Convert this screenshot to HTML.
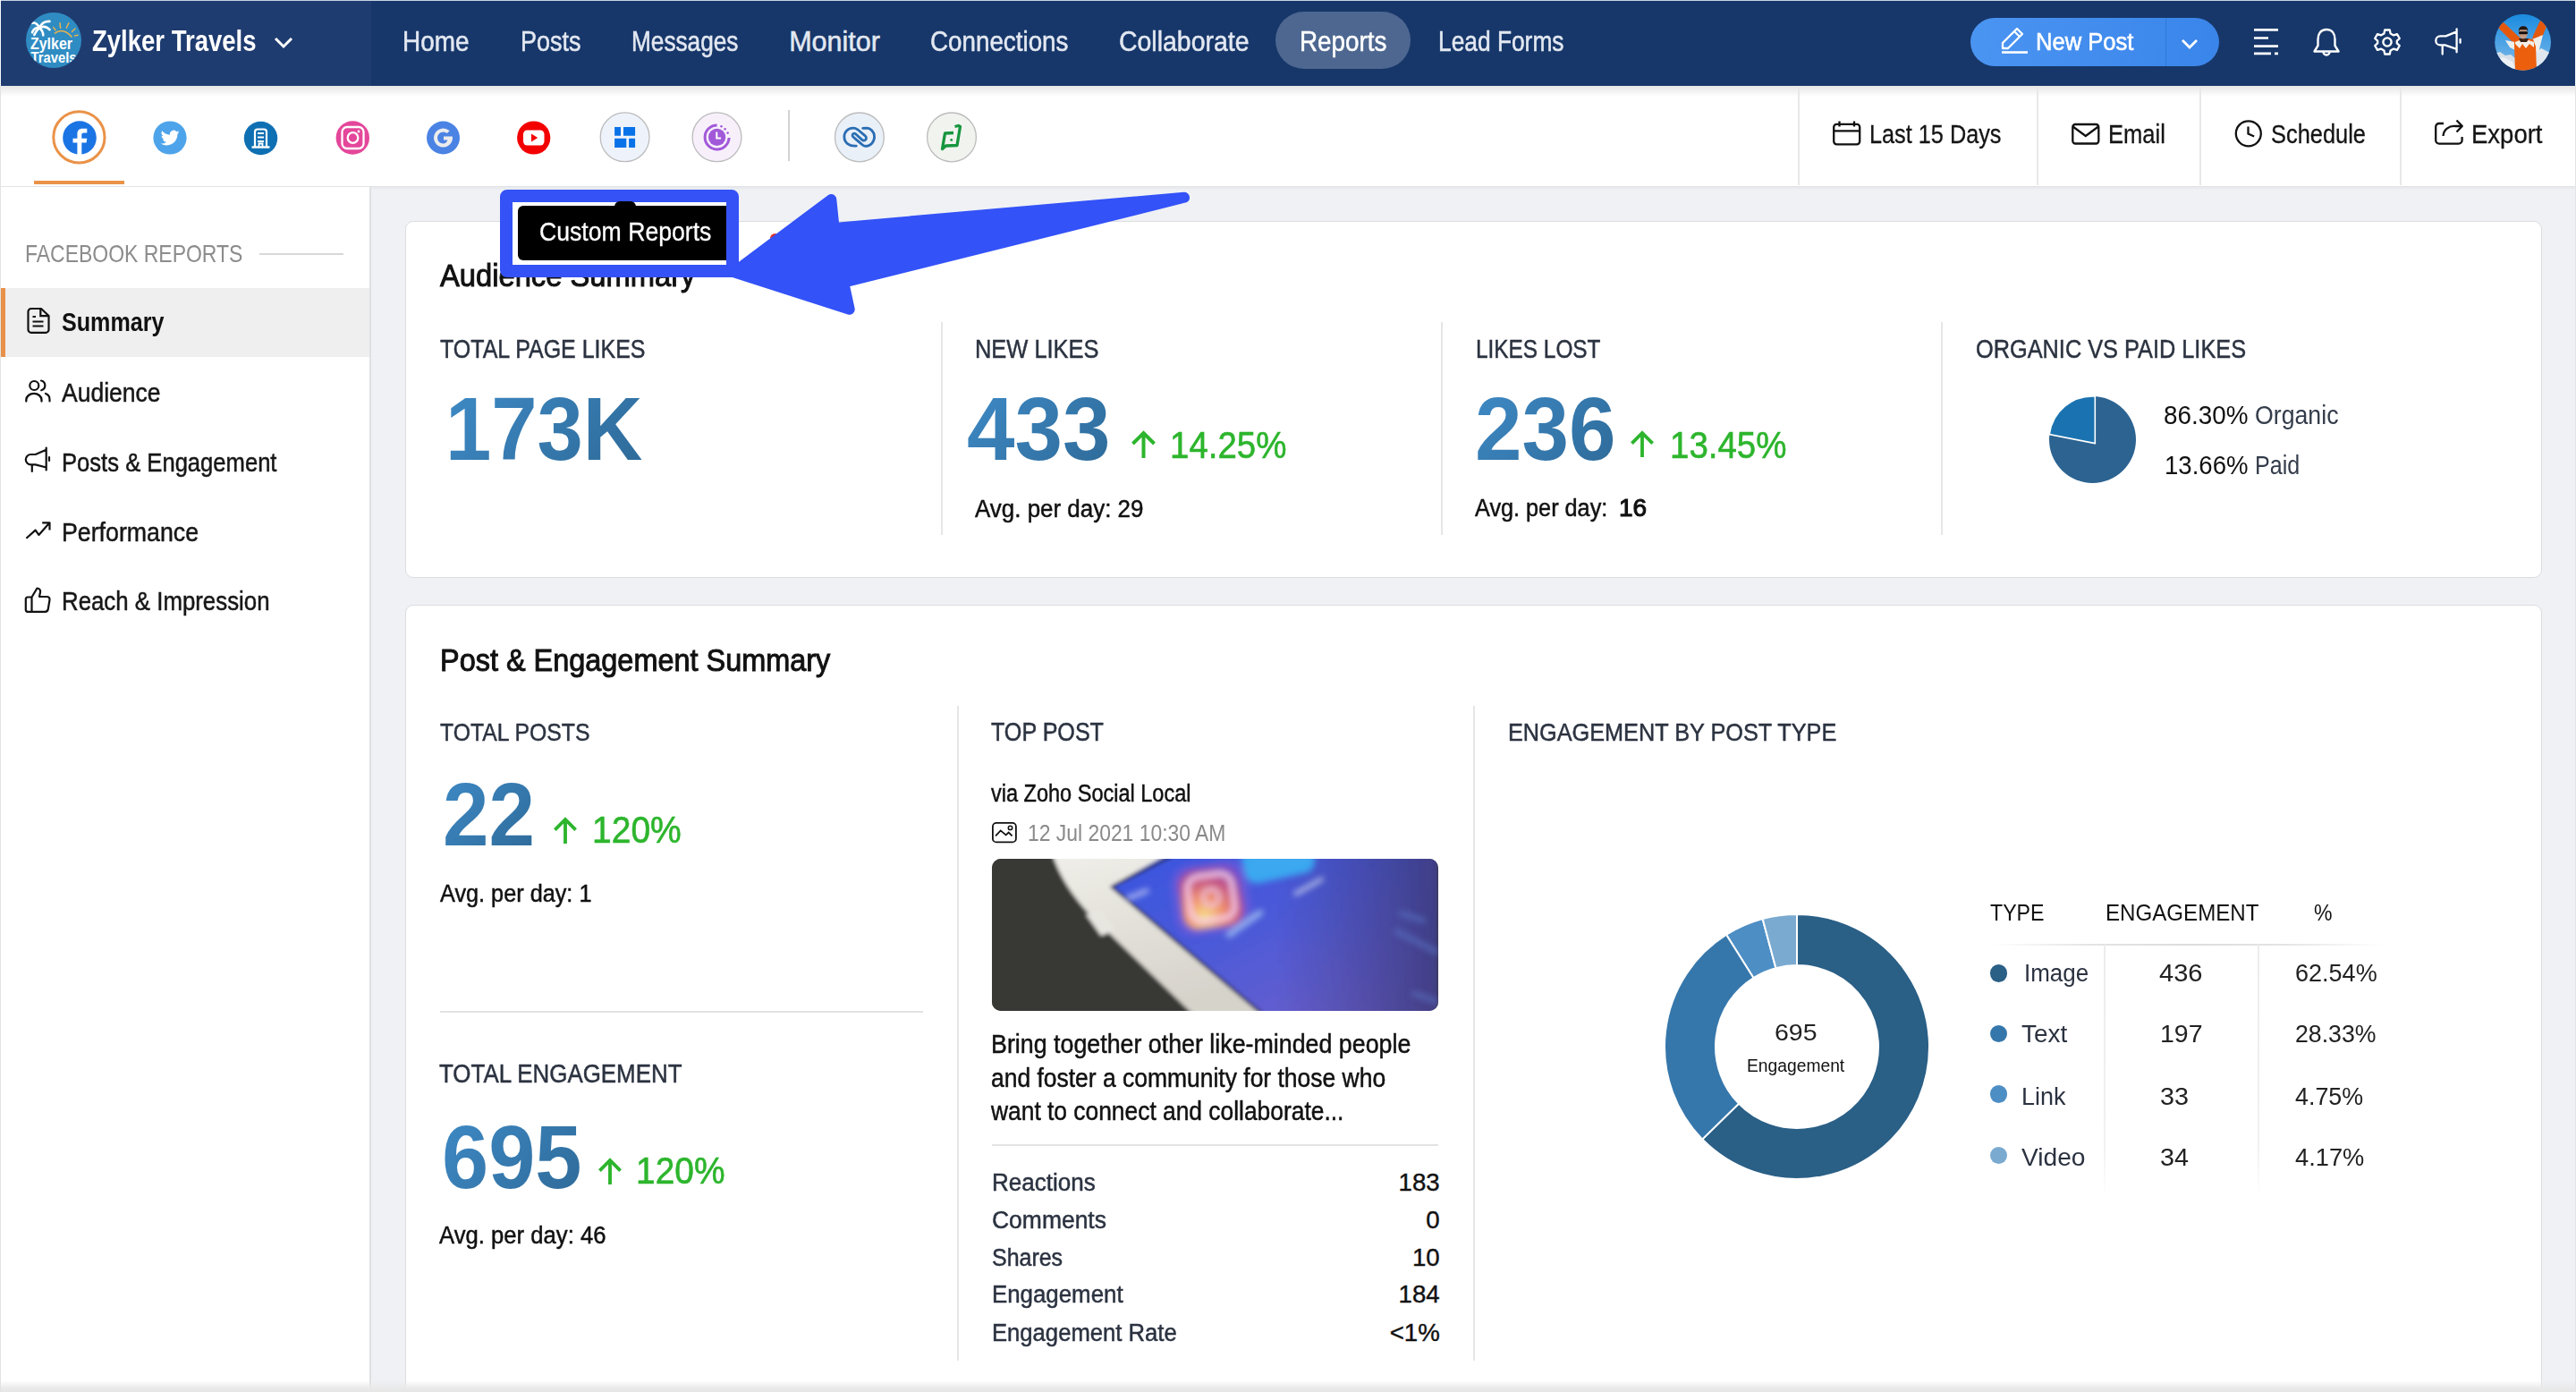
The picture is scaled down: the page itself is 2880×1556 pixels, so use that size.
<!DOCTYPE html><html><head><meta charset="utf-8"><style>
*{box-sizing:border-box}
html,body{margin:0;padding:0;width:2880px;height:1556px;overflow:hidden;background:#eff1f5;font-family:"Liberation Sans",sans-serif}
.t{position:absolute;white-space:pre;transform-origin:0 0}
.a{position:absolute}
</style></head><body>
<div class="a" style="left:0;top:0;width:2880px;height:96px;background:#17376a"></div><div class="a" style="left:0;top:0;width:415px;height:96px;background:#1f3c70"></div><div class="a" style="left:0;top:0;width:2880px;height:1px;background:#c9d3e3"></div><div class="a" style="left:0;top:96px;width:2880px;height:113px;background:#fff;border-bottom:1.5px solid #e2e3e6;box-shadow:0 2px 3px rgba(0,0,0,0.04)"></div><div class="a" style="left:0;top:96px;width:2880px;height:12px;background:linear-gradient(#e6e6e6,rgba(255,255,255,0))"></div><div class="a" style="left:0;top:209px;width:415px;height:1347px;background:#fff;border-right:2px solid #dfe0e3;border-left:1px solid #ececec"></div><div class="a" style="left:453px;top:247px;width:2389px;height:399px;background:#fff;border:1.5px solid #dcdde1;border-radius:9px"></div><div class="a" style="left:453px;top:676px;width:2389px;height:1000px;background:#fff;border:1.5px solid #dcdde1;border-radius:9px"></div><div class="a" style="left:0;top:1543px;width:2880px;height:13px;background:linear-gradient(rgba(230,230,230,0),#e9e9e9 70%,#e6e6e6)"></div><div class="t" style="left:103.2px;top:29.6px;font-size:32.56px;line-height:32.56px;font-weight:bold;color:#fff;transform:scaleX(0.8449);">Zylker Travels</div>
<div class="t" style="left:450.2px;top:31.4px;font-size:30.52px;line-height:30.52px;color:#e3e8f1;transform:scaleX(0.9148);-webkit-text-stroke:0.5px #e3e8f1;">Home</div>
<div class="t" style="left:582.2px;top:31.4px;font-size:30.52px;line-height:30.52px;color:#e3e8f1;transform:scaleX(0.8842);-webkit-text-stroke:0.5px #e3e8f1;">Posts</div>
<div class="t" style="left:706.2px;top:31.4px;font-size:30.52px;line-height:30.52px;color:#e3e8f1;transform:scaleX(0.8589);-webkit-text-stroke:0.5px #e3e8f1;">Messages</div>
<div class="t" style="left:882.2px;top:31.4px;font-size:30.52px;line-height:30.52px;color:#e3e8f1;-webkit-text-stroke:0.5px #e3e8f1;">Monitor</div>
<div class="t" style="left:1040.2px;top:31.4px;font-size:30.52px;line-height:30.52px;color:#e3e8f1;transform:scaleX(0.9105);-webkit-text-stroke:0.5px #e3e8f1;">Connections</div>
<div class="t" style="left:1251.2px;top:31.4px;font-size:30.52px;line-height:30.52px;color:#e3e8f1;transform:scaleX(0.9321);-webkit-text-stroke:0.5px #e3e8f1;">Collaborate</div>
<div class="t" style="left:1608.2px;top:31.4px;font-size:30.52px;line-height:30.52px;color:#e3e8f1;transform:scaleX(0.8628);-webkit-text-stroke:0.5px #e3e8f1;">Lead Forms</div>
<div class="a" style="left:1426px;top:13px;width:151px;height:64px;border-radius:32px;background:#4e6790"></div><div class="t" style="left:1453.2px;top:31.4px;font-size:30.52px;line-height:30.52px;color:#fff;transform:scaleX(0.9124);-webkit-text-stroke:0.5px #fff;">Reports</div>
<div class="a" style="left:2203px;top:20px;width:278px;height:54px;border-radius:27px;background:linear-gradient(90deg,#4a94f2,#3a85ea)"></div><div class="a" style="left:2421px;top:20px;width:1px;height:54px;background:#3179d8"></div><div class="t" style="left:2276.2px;top:33.2px;font-size:27.62px;line-height:27.62px;color:#fff;transform:scaleX(0.9266);-webkit-text-stroke:0.6px #fff;">New Post</div>
<div class="a" style="left:2010px;top:96px;width:1.5px;height:111px;background:#e8e8e8"></div><div class="a" style="left:2277px;top:96px;width:1.5px;height:111px;background:#e8e8e8"></div><div class="a" style="left:2459px;top:96px;width:1.5px;height:111px;background:#e8e8e8"></div><div class="a" style="left:2683px;top:96px;width:1.5px;height:111px;background:#e8e8e8"></div><div class="t" style="left:2090.2px;top:136.1px;font-size:29.07px;line-height:29.07px;color:#141414;transform:scaleX(0.8694);-webkit-text-stroke:0.3px #141414;">Last 15 Days</div>
<div class="t" style="left:2356.8px;top:136.1px;font-size:29.07px;line-height:29.07px;color:#141414;transform:scaleX(0.8789);-webkit-text-stroke:0.3px #141414;">Email</div>
<div class="t" style="left:2538.7px;top:136.1px;font-size:29.07px;line-height:29.07px;color:#141414;transform:scaleX(0.8744);-webkit-text-stroke:0.3px #141414;">Schedule</div>
<div class="t" style="left:2763.2px;top:136.1px;font-size:29.07px;line-height:29.07px;color:#141414;transform:scaleX(0.9463);-webkit-text-stroke:0.3px #141414;">Export</div>
<div class="t" style="left:28.2px;top:270.7px;font-size:26.74px;line-height:26.74px;color:#8c8c8c;transform:scaleX(0.8593);">FACEBOOK REPORTS</div>
<div class="a" style="left:290px;top:283px;width:94px;height:1.5px;background:#d8d8d8"></div><div class="a" style="left:0;top:322px;width:413px;height:77px;background:#efefef"></div><div class="a" style="left:1px;top:322px;width:5px;height:77px;background:#e8914a"></div><div class="t" style="left:69.2px;top:344.7px;font-size:29.80px;line-height:29.80px;font-weight:bold;color:#111;transform:scaleX(0.8431);">Summary</div>
<div class="t" style="left:69.2px;top:424.3px;font-size:29.80px;line-height:29.80px;color:#161616;transform:scaleX(0.8893);-webkit-text-stroke:0.5px #161616;">Audience</div>
<div class="t" style="left:69.2px;top:501.7px;font-size:29.80px;line-height:29.80px;color:#161616;transform:scaleX(0.8591);-webkit-text-stroke:0.5px #161616;">Posts &amp; Engagement</div>
<div class="t" style="left:69.2px;top:579.7px;font-size:29.80px;line-height:29.80px;color:#161616;transform:scaleX(0.8975);-webkit-text-stroke:0.5px #161616;">Performance</div>
<div class="t" style="left:69.2px;top:656.7px;font-size:29.80px;line-height:29.80px;color:#161616;transform:scaleX(0.8666);-webkit-text-stroke:0.5px #161616;">Reach &amp; Impression</div>
<div class="t" style="left:491.7px;top:290.6px;font-size:35.76px;line-height:35.76px;color:#111;transform:scaleX(0.9150);-webkit-text-stroke:1px #111;">Audience Summary</div>
<div class="t" style="left:491.7px;top:374.9px;font-size:29.51px;line-height:29.51px;color:#2b3240;transform:scaleX(0.8465);-webkit-text-stroke:0.5px #2b3240;">TOTAL PAGE LIKES</div>
<div class="t" style="left:498.2px;top:428.8px;font-size:100.29px;line-height:100.29px;font-weight:bold;color:#111;transform:scaleX(0.9195);background:linear-gradient(135deg,#3e8ac6 0%,#2e6a98 100%);-webkit-background-clip:text;background-clip:text;color:transparent;">173K</div>
<div class="a" style="left:1052px;top:360px;width:1.5px;height:238px;background:#e6e6e6"></div><div class="a" style="left:1611px;top:360px;width:1.5px;height:238px;background:#e6e6e6"></div><div class="a" style="left:2170px;top:360px;width:1.5px;height:238px;background:#e6e6e6"></div><div class="t" style="left:1090.2px;top:374.9px;font-size:29.51px;line-height:29.51px;color:#2b3240;transform:scaleX(0.8619);-webkit-text-stroke:0.5px #2b3240;">NEW LIKES</div>
<div class="t" style="left:1081.2px;top:428.8px;font-size:100.29px;line-height:100.29px;font-weight:bold;color:#111;transform:scaleX(0.9594);background:linear-gradient(135deg,#3e8ac6 0%,#2e6a98 100%);-webkit-background-clip:text;background-clip:text;color:transparent;">433</div>
<svg class="a" style="left:1263px;top:481px" width="31" height="31" viewBox="0 0 30 31"><path d="M15 3V31M3 15L15 3L27 15" fill="none" stroke="#2db52d" stroke-width="4"/></svg>
<div class="t" style="left:1308.2px;top:477.2px;font-size:42.15px;line-height:42.15px;color:#2db52d;transform:scaleX(0.9127);-webkit-text-stroke:0.6px #2db52d;">14.25%</div>
<div class="t" style="left:1090.2px;top:554.5px;font-size:27.62px;line-height:27.62px;color:#111;transform:scaleX(0.9397);-webkit-text-stroke:0.5px #111;">Avg. per day: 29</div>
<div class="t" style="left:1650.0px;top:374.5px;font-size:29.51px;line-height:29.51px;color:#2b3240;transform:scaleX(0.8258);-webkit-text-stroke:0.5px #2b3240;">LIKES LOST</div>
<div class="t" style="left:1649.2px;top:428.5px;font-size:100.29px;line-height:100.29px;font-weight:bold;color:#111;transform:scaleX(0.9415);background:linear-gradient(135deg,#3e8ac6 0%,#2e6a98 100%);-webkit-background-clip:text;background-clip:text;color:transparent;">236</div>
<svg class="a" style="left:1821px;top:481px" width="30" height="30" viewBox="0 0 30 31"><path d="M15 3V31M3 15L15 3L27 15" fill="none" stroke="#2db52d" stroke-width="4"/></svg>
<div class="t" style="left:1866.6px;top:476.8px;font-size:42.15px;line-height:42.15px;color:#2db52d;transform:scaleX(0.9127);-webkit-text-stroke:0.6px #2db52d;">13.45%</div>
<div class="t" style="left:1649.2px;top:554.3px;font-size:27.62px;line-height:27.62px;color:#111;transform:scaleX(0.9142);-webkit-text-stroke:0.5px #111;">Avg. per day:</div>
<div class="t" style="left:1810.0px;top:554.3px;font-size:27.62px;line-height:27.62px;color:#111;transform:scaleX(1.0127);-webkit-text-stroke:1.1px #111;">16</div>
<div class="t" style="left:2209.2px;top:374.7px;font-size:29.51px;line-height:29.51px;color:#2b3240;transform:scaleX(0.8583);-webkit-text-stroke:0.5px #2b3240;">ORGANIC VS PAID LIKES</div>
<div class="t" style="left:2418.9px;top:449.7px;font-size:28.63px;line-height:28.63px;color:#111;transform:scaleX(0.9730);">86.30%</div>
<div class="t" style="left:2520.7px;top:449.7px;font-size:28.63px;line-height:28.63px;color:#343c4b;transform:scaleX(0.9327);">Organic</div>
<div class="t" style="left:2420.2px;top:506.0px;font-size:28.63px;line-height:28.63px;color:#111;transform:scaleX(0.9627);">13.66%</div>
<div class="t" style="left:2520.7px;top:506.0px;font-size:28.63px;line-height:28.63px;color:#343c4b;transform:scaleX(0.8762);">Paid</div>
<svg class="a" style="left:2280px;top:430px" width="120" height="120" viewBox="2280 430 120 120"><circle cx="2339.5" cy="491.5" r="48.5" fill="#2c6391"/><path d="M2342.3 495.6L2291.3 485.5A48.5 48.5 0 0 1 2342.3 443Z" fill="#1a73b0" stroke="#fff" stroke-width="1.6" stroke-linejoin="miter"/></svg>
<div class="t" style="left:492.2px;top:719.8px;font-size:35.17px;line-height:35.17px;color:#111;transform:scaleX(0.9226);-webkit-text-stroke:1px #111;">Post &amp; Engagement Summary</div>
<div class="t" style="left:492.2px;top:803.9px;font-size:28.34px;line-height:28.34px;color:#2b3240;transform:scaleX(0.8741);-webkit-text-stroke:0.5px #2b3240;">TOTAL POSTS</div>
<div class="t" style="left:495.2px;top:859.8px;font-size:100.29px;line-height:100.29px;font-weight:bold;color:#111;transform:scaleX(0.9236);background:linear-gradient(135deg,#3e8ac6 0%,#2e6a98 100%);-webkit-background-clip:text;background-clip:text;color:transparent;">22</div>
<svg class="a" style="left:617px;top:913px" width="30" height="30" viewBox="0 0 30 31"><path d="M15 3V31M3 15L15 3L27 15" fill="none" stroke="#2db52d" stroke-width="4"/></svg>
<div class="t" style="left:661.9px;top:907.2px;font-size:42.15px;line-height:42.15px;color:#2db52d;transform:scaleX(0.9256);-webkit-text-stroke:0.6px #2db52d;">120%</div>
<div class="t" style="left:492.2px;top:984.5px;font-size:27.62px;line-height:27.62px;color:#111;transform:scaleX(0.9150);-webkit-text-stroke:0.5px #111;">Avg. per day: 1</div>
<div class="a" style="left:492px;top:1130px;width:540px;height:1.5px;background:#e3e3e3"></div><div class="t" style="left:491.2px;top:1184.6px;font-size:29.51px;line-height:29.51px;color:#2b3240;transform:scaleX(0.8778);-webkit-text-stroke:0.5px #2b3240;">TOTAL ENGAGEMENT</div>
<div class="t" style="left:494.2px;top:1242.8px;font-size:100.29px;line-height:100.29px;font-weight:bold;color:#111;transform:scaleX(0.9355);background:linear-gradient(135deg,#3e8ac6 0%,#2e6a98 100%);-webkit-background-clip:text;background-clip:text;color:transparent;">695</div>
<svg class="a" style="left:667px;top:1294px" width="30" height="30" viewBox="0 0 30 31"><path d="M15 3V31M3 15L15 3L27 15" fill="none" stroke="#2db52d" stroke-width="4"/></svg>
<div class="t" style="left:711.2px;top:1288.2px;font-size:42.15px;line-height:42.15px;color:#2db52d;transform:scaleX(0.9228);-webkit-text-stroke:0.6px #2db52d;">120%</div>
<div class="t" style="left:491.2px;top:1366.5px;font-size:27.62px;line-height:27.62px;color:#111;transform:scaleX(0.9297);-webkit-text-stroke:0.5px #111;">Avg. per day: 46</div>
<div class="a" style="left:1070px;top:789px;width:1.5px;height:732px;background:#e6e6e6"></div><div class="a" style="left:1647px;top:789px;width:1.5px;height:732px;background:#e6e6e6"></div><div class="t" style="left:1108.2px;top:804.0px;font-size:28.78px;line-height:28.78px;color:#2b3240;transform:scaleX(0.8721);-webkit-text-stroke:0.5px #2b3240;">TOP POST</div>
<div class="t" style="left:1108.2px;top:873.3px;font-size:27.62px;line-height:27.62px;color:#111;transform:scaleX(0.8515);-webkit-text-stroke:0.5px #111;">via Zoho Social Local</div>
<div class="t" style="left:1149.2px;top:918.5px;font-size:25.29px;line-height:25.29px;color:#8a8a8a;transform:scaleX(0.9053);">12 Jul 2021 10:30 AM</div>
<div class="t" style="left:1108.2px;top:1153.3px;font-size:29.07px;line-height:29.07px;color:#111;transform:scaleX(0.9223);-webkit-text-stroke:0.5px #111;">Bring together other like-minded people</div>
<div class="t" style="left:1108.2px;top:1190.8px;font-size:29.07px;line-height:29.07px;color:#111;transform:scaleX(0.9102);-webkit-text-stroke:0.5px #111;">and foster a community for those who</div>
<div class="t" style="left:1108.3px;top:1227.8px;font-size:29.07px;line-height:29.07px;color:#111;transform:scaleX(0.9074);-webkit-text-stroke:0.5px #111;">want to connect and collaborate...</div>
<div class="a" style="left:1109px;top:1279px;width:499px;height:1.5px;background:#e3e3e3"></div><div class="t" style="left:1108.6px;top:1308.2px;font-size:27.62px;line-height:27.62px;color:#2b3240;transform:scaleX(0.9437);-webkit-text-stroke:0.5px #2b3240;">Reactions</div>
<div class="t" style="left:1563.6px;top:1308.2px;font-size:27.62px;line-height:27.62px;color:#111;-webkit-text-stroke:0.4px #111;">183</div>
<div class="t" style="left:1108.6px;top:1349.9px;font-size:27.62px;line-height:27.62px;color:#2b3240;transform:scaleX(0.9586);-webkit-text-stroke:0.5px #2b3240;">Comments</div>
<div class="t" style="left:1594.3px;top:1349.9px;font-size:27.62px;line-height:27.62px;color:#111;-webkit-text-stroke:0.4px #111;">0</div>
<div class="t" style="left:1108.6px;top:1392.1px;font-size:27.62px;line-height:27.62px;color:#2b3240;transform:scaleX(0.9041);-webkit-text-stroke:0.5px #2b3240;">Shares</div>
<div class="t" style="left:1579.0px;top:1392.1px;font-size:27.62px;line-height:27.62px;color:#111;-webkit-text-stroke:0.4px #111;">10</div>
<div class="t" style="left:1108.6px;top:1433.3px;font-size:27.62px;line-height:27.62px;color:#2b3240;transform:scaleX(0.9361);-webkit-text-stroke:0.5px #2b3240;">Engagement</div>
<div class="t" style="left:1563.6px;top:1433.3px;font-size:27.62px;line-height:27.62px;color:#111;-webkit-text-stroke:0.4px #111;">184</div>
<div class="t" style="left:1108.6px;top:1475.5px;font-size:27.62px;line-height:27.62px;color:#2b3240;transform:scaleX(0.9285);-webkit-text-stroke:0.5px #2b3240;">Engagement Rate</div>
<div class="t" style="left:1553.7px;top:1475.5px;font-size:27.62px;line-height:27.62px;color:#111;-webkit-text-stroke:0.4px #111;">&lt;1%</div>
<div class="t" style="left:1685.9px;top:803.9px;font-size:28.34px;line-height:28.34px;color:#2b3240;transform:scaleX(0.8916);-webkit-text-stroke:0.5px #2b3240;">ENGAGEMENT BY POST TYPE</div>
<div class="t" style="left:1984.2px;top:1140.5px;font-size:26.16px;line-height:26.16px;color:#222;transform:scaleX(1.0885);">695</div>
<div class="t" style="left:1953.2px;top:1180.1px;font-size:21.08px;line-height:21.08px;color:#111;transform:scaleX(0.9137);">Engagement</div>
<div class="t" style="left:2225.2px;top:1006.8px;font-size:26.16px;line-height:26.16px;color:#111;transform:scaleX(0.8853);">TYPE</div>
<div class="t" style="left:2354.2px;top:1006.8px;font-size:26.16px;line-height:26.16px;color:#111;transform:scaleX(0.9217);">ENGAGEMENT</div>
<div class="t" style="left:2586.7px;top:1006.8px;font-size:26.16px;line-height:26.16px;color:#111;transform:scaleX(0.8814);">%</div>
<div class="a" style="left:2226px;top:1055px;width:439px;height:1.5px;background:linear-gradient(90deg,rgba(225,225,225,0),#e4e4e4 25%,#dcdcdc 50%,#e4e4e4 75%,rgba(225,225,225,0))"></div><div class="a" style="left:2352px;top:1056px;width:1.5px;height:282px;background:linear-gradient(#ececec,#f1f1f1 80%,rgba(240,240,240,0))"></div><div class="a" style="left:2524px;top:1056px;width:1.5px;height:282px;background:linear-gradient(#ececec,#f1f1f1 80%,rgba(240,240,240,0))"></div><div class="t" style="left:2263.2px;top:1074.3px;font-size:27.62px;line-height:27.62px;color:#2b3240;transform:scaleX(0.9408);">Image</div>
<div class="t" style="left:2414.2px;top:1074.3px;font-size:27.62px;line-height:27.62px;color:#222;transform:scaleX(1.0529);">436</div>
<div class="t" style="left:2566.0px;top:1074.3px;font-size:27.62px;line-height:27.62px;color:#222;transform:scaleX(0.9789);">62.54%</div>
<div class="a" style="left:2225.0px;top:1078.4px;width:19.2px;height:19.2px;border-radius:50%;background:#2a5f86"></div><div class="t" style="left:2260.2px;top:1141.5px;font-size:27.62px;line-height:27.62px;color:#2b3240;transform:scaleX(1.0109);">Text</div>
<div class="t" style="left:2415.2px;top:1141.5px;font-size:27.62px;line-height:27.62px;color:#222;transform:scaleX(1.0312);">197</div>
<div class="t" style="left:2566.0px;top:1141.5px;font-size:27.62px;line-height:27.62px;color:#222;transform:scaleX(0.9672);">28.33%</div>
<div class="a" style="left:2225.0px;top:1145.9px;width:19.2px;height:19.2px;border-radius:50%;background:#3677ab"></div><div class="t" style="left:2260.2px;top:1211.5px;font-size:27.62px;line-height:27.62px;color:#2b3240;transform:scaleX(0.9763);">Link</div>
<div class="t" style="left:2415.2px;top:1211.5px;font-size:27.62px;line-height:27.62px;color:#222;transform:scaleX(1.0388);">33</div>
<div class="t" style="left:2566.0px;top:1211.5px;font-size:27.62px;line-height:27.62px;color:#222;transform:scaleX(0.9720);">4.75%</div>
<div class="a" style="left:2225.0px;top:1213.4px;width:19.2px;height:19.2px;border-radius:50%;background:#4d8ec4"></div><div class="t" style="left:2260.2px;top:1280.3px;font-size:27.62px;line-height:27.62px;color:#2b3240;transform:scaleX(1.0193);">Video</div>
<div class="t" style="left:2415.2px;top:1280.3px;font-size:27.62px;line-height:27.62px;color:#222;transform:scaleX(1.0388);">34</div>
<div class="t" style="left:2566.0px;top:1280.3px;font-size:27.62px;line-height:27.62px;color:#222;transform:scaleX(0.9873);">4.17%</div>
<div class="a" style="left:2225.0px;top:1282.2px;width:19.2px;height:19.2px;border-radius:50%;background:#7aaad0"></div><svg class="a" style="left:1850px;top:1010px" width="320" height="320" viewBox="1850 1010 320 320"><path d="M2009.00 1022.00A148 148 0 1 1 1903.23 1273.52L1943.96 1233.65A91 91 0 1 0 2009.00 1079.00Z" fill="#2a5f86" stroke="#fff" stroke-width="2"/><path d="M1903.23 1273.52A148 148 0 0 1 1930.18 1044.74L1960.54 1092.98A91 91 0 0 0 1943.96 1233.65Z" fill="#3677ab" stroke="#fff" stroke-width="2"/><path d="M1930.18 1044.74A148 148 0 0 1 1970.59 1027.07L1985.38 1082.12A91 91 0 0 0 1960.54 1092.98Z" fill="#4d8ec4" stroke="#fff" stroke-width="2"/><path d="M1970.59 1027.07A148 148 0 0 1 2009.00 1022.00L2009.00 1079.00A91 91 0 0 0 1985.38 1082.12Z" fill="#7aaad0" stroke="#fff" stroke-width="2"/></svg>
<svg class="a" style="left:1109px;top:960px;" width="499" height="170" viewBox="0 0 499 170"><defs>
<clipPath id="pc"><rect width="499" height="170" rx="10"/></clipPath>
<linearGradient id="scr" x1="0" y1="0" x2="1" y2="1"><stop offset="0" stop-color="#3856e0"/><stop offset="0.45" stop-color="#4c5ad8"/><stop offset="1" stop-color="#7460c8"/></linearGradient>
<linearGradient id="scr2" x1="0" y1="0" x2="1" y2="0"><stop offset="0.5" stop-color="#3c3f8a" stop-opacity="0"/><stop offset="1" stop-color="#3a3878" stop-opacity="0.85"/></linearGradient>
<radialGradient id="ig" cx="0.35" cy="0.8" r="0.9"><stop offset="0" stop-color="#f7e08a"/><stop offset="0.35" stop-color="#f0906a"/><stop offset="0.7" stop-color="#c0508a"/><stop offset="1" stop-color="#7a4cc8"/></radialGradient>
<filter id="bl" x="-5%" y="-5%" width="110%" height="110%"><feGaussianBlur stdDeviation="2.2"/></filter>
<filter id="bl2"><feGaussianBlur stdDeviation="3.5"/></filter>
</defs>
<g clip-path="url(#pc)">
<rect width="499" height="170" fill="#3a3935"/>
<g filter="url(#bl)">
<path d="M-5 -5H499V175H-5Z" fill="#393834"/>
<linearGradient id="band" x1="0" y1="0" x2="0.3" y2="1"><stop offset="0" stop-color="#f0efe9"/><stop offset="1" stop-color="#d6d3cb"/></linearGradient>
<path d="M66 -10L205 -10L133 30.5L304 175L226 175L128 80Q80 38 66 -10Z" fill="url(#band)"/>
<path d="M205 -10L499 -10V175H304L133 30.5Z" fill="url(#scr)"/>
<path d="M205 -10L499 -10V175H304L133 30.5Z" fill="url(#scr2)"/>
<path d="M133 30.5L304 175" stroke="#262650" stroke-width="3"/>
<path d="M136 30L203 -4" stroke="#1a1a40" stroke-width="3"/>
<path d="M105 62L122 58L138 80L122 86Z" fill="#e8e6e0"/>
</g>
<g filter="url(#bl2)">
<rect x="202" y="4" width="86" height="80" rx="22" fill="#8a5ad8" opacity="0.45" transform="rotate(-8 245 43)"/><rect x="211" y="9" width="68" height="68" rx="17" fill="url(#ig)" transform="rotate(-8 245 43)"/>
<rect x="220" y="18" width="50" height="50" rx="13" fill="none" stroke="#f8d0f0" stroke-width="4.5" transform="rotate(-8 245 43)"/>
<circle cx="245" cy="43" r="9" fill="none" stroke="#f0c0d8" stroke-width="4"/>
<path d="M265 85L300 60" stroke="#9ab8f0" stroke-width="6" stroke-linecap="round"/>
<rect x="280" y="-30" width="80" height="52" rx="14" fill="#3aa8f0" transform="rotate(-12 320 0)"/>
<path d="M338 40L370 22" stroke="#c8d0f0" stroke-width="4"/>
<path d="M455 60L485 70M450 80L499 105M470 150L499 160" stroke="#5a78c8" stroke-width="6" opacity="0.6"/>
<path d="M150 45L175 35" stroke="#d0d8f8" stroke-width="4"/>
</g>
</g></svg>
<svg class="a" style="left:29px;top:14px;" width="62" height="62" viewBox="0 0 62 62">
<defs><clipPath id="lc"><circle cx="31" cy="31" r="31"/></clipPath></defs>
<circle cx="31" cy="31" r="31" fill="#2f8cc3"/>
<g clip-path="url(#lc)">
<path d="M15 16.4Q11 10.5 6.7 11.8M15.5 16Q19 9.5 26.5 9.9M16 16.8Q22 14 26.5 19.2M14 16.8Q9 17 7 22.3M14.5 17.5Q11 21 9.3 25M15.5 17.5Q19 20.5 19.3 25.4" stroke="#fff" stroke-width="2.6" fill="none" stroke-linecap="round"/>
<path d="M31.9 23.4Q41.7 16 51.4 27.6" stroke="#e8b24c" stroke-width="1.6" fill="none"/>
<path d="M30.7 16.6L33.1 19.7M38 11.8L38.6 17.3M47.8 11.8L45.3 17.3M55 18L51.4 21.5M58 25.2L54.5 26" stroke="#e8b24c" stroke-width="1.5" stroke-linecap="round"/>
<text x="5" y="40.8" font-family="Liberation Sans" font-weight="bold" font-size="18.5" fill="#fff" textLength="47" lengthAdjust="spacingAndGlyphs">Zylker</text>
<text x="5.6" y="56.2" font-family="Liberation Sans" font-weight="bold" font-size="16.5" fill="#fff" textLength="51" lengthAdjust="spacingAndGlyphs">Travels</text>
</g></svg>
<svg class="a" style="left:305px;top:40px;" width="24" height="16" viewBox="0 0 24 16"><path d="M3 3L12 12L21 3" stroke="#fff" stroke-width="3" fill="none"/></svg>
<svg class="a" style="left:2235px;top:29px;" width="36" height="34" viewBox="0 0 36 34"><path d="M4 25 L4 19 L20 3 L26 9 L10 25 Z M17 6 L23 12" stroke="#fff" stroke-width="2.3" fill="none" stroke-linejoin="round"/><path d="M3 29.5H32" stroke="#fff" stroke-width="2.6"/></svg>
<svg class="a" style="left:2436px;top:41px;" width="24" height="16" viewBox="0 0 24 16"><path d="M4 4L12 12L20 4" stroke="#fff" stroke-width="2.8" fill="none"/></svg>
<svg class="a" style="left:2518px;top:30px;" width="32" height="34" viewBox="0 0 32 34"><path d="M2 3.3H29M2 12.5H18M2 21.6H29M2 29.9H21M25 29.9H29" stroke="#fff" stroke-width="2.7"/></svg>
<svg class="a" style="left:2584px;top:30px;" width="34" height="34" viewBox="0 0 34 34"><path d="M17 3C10.5 3 7.5 8 7.5 14V21L3.5 27.5H30.5L26.5 21V14C26.5 8 23.5 3 17 3Z" stroke="#fff" stroke-width="2.4" fill="none" stroke-linejoin="round"/><path d="M13.5 28A3.5 3.5 0 0 0 20.5 28" stroke="#fff" stroke-width="2.4" fill="none"/></svg>
<svg class="a" style="left:2653px;top:31px;" width="32" height="32" viewBox="0 0 32 32"><g transform="translate(16 16)"><path d="M-2.8 -13.5H2.8L3.6 -9.6L7.2 -7.6L11 -8.9L13.8 -4L10.8 -1.3V1.3L13.8 4L11 8.9L7.2 7.6L3.6 9.6L2.8 13.5H-2.8L-3.6 9.6L-7.2 7.6L-11 8.9L-13.8 4L-10.8 1.3V-1.3L-13.8 -4L-11 -8.9L-7.2 -7.6L-3.6 -9.6Z" stroke="#fff" stroke-width="2.3" fill="none" stroke-linejoin="round"/><circle r="4.6" stroke="#fff" stroke-width="2.4" fill="none"/></g></svg>
<svg class="a" style="left:2720px;top:30px;" width="36" height="34" viewBox="0 0 36 34"><path d="M26.6 2.4V28.3M26.6 5.4L14.5 10.4H8.3A5 5 0 0 0 8.3 20.4H13.5L26.6 24.9M10.7 20.4V30.5M30.6 13.8V17.8" stroke="#fff" stroke-width="2.3" fill="none" stroke-linejoin="round" stroke-linecap="round"/></svg>
<svg class="a" style="left:2789px;top:16px;" width="63" height="63" viewBox="0 0 63 63"><defs><clipPath id="av"><circle cx="31.6" cy="31.3" r="31.4"/></clipPath><linearGradient id="sky" x1="0" y1="0" x2="0" y2="1"><stop offset="0" stop-color="#1a8be0"/><stop offset="0.6" stop-color="#58a8e6"/><stop offset="1" stop-color="#8cc0e8"/></linearGradient><filter id="avb"><feGaussianBlur stdDeviation="0.6"/></filter></defs>
<g clip-path="url(#av)"><rect width="63" height="63" fill="url(#sky)"/>
<g filter="url(#avb)">
<path d="M0 44L6 42L12 46L18 45L24 50V63H0Z" fill="#d8e0e8"/><path d="M2 50L10 48L20 53L24 63H0Z" fill="#eef2f6"/><path d="M44 44L52 38L58 41L63 44V63H44Z" fill="#e0e7ee"/>
<path d="M3 14L10 9L29 27L22 33Z" fill="#e4580f"/>
<path d="M51 7L59 11L53 26L42 30L43 24Z" fill="#e4580f"/>
<path d="M42 28L54 23L49 43L43 40Z" fill="#efefec"/>
<path d="M12 29L23 31L23 40L17 37Z" fill="#efefec"/>
<path d="M22 30L27 27H38L43 28L46 36L47 63H23L22 36Z" fill="#ec5e10"/>
<path d="M23 33L28 38L31 33L35 38L39 33L44 37L44 31L38 29L33 31L28 29L23 31Z" fill="#f2efe8"/>
<path d="M27 27L38 27L36 31L29 31Z" fill="#3a2018"/>
<ellipse cx="32" cy="21.5" rx="4.8" ry="6" fill="#c49a82"/>
<path d="M26.8 19.5C26.8 14.5 29.3 13.2 32 13.2C35 13.2 37.3 14.5 37.3 19.5L36 17.2H28Z" fill="#22140e"/>
<rect x="27" y="19.3" width="10" height="3" rx="1.2" fill="#141010"/>
</g></g></svg>
<svg class="a" style="left:56px;top:121px;" width="66" height="66" viewBox="0 0 66 66"><circle cx="32.4" cy="32.4" r="28.6" stroke="#ea9248" stroke-width="3" fill="none"/><circle cx="33" cy="33" r="18.8" fill="#1b74e4"/><path d="M30.4 53V38.6H25.5V33.7H30.4V28.8C30.4 24.8 32.5 22.8 36.2 22.8H41.3V27.5H37.8C36 27.5 35.3 28.3 35.3 29.8V33.7H41.3L40.6 38.6H35.3V53Z" fill="#fff"/></svg>
<div class="a" style="left:38px;top:202px;width:101px;height:4px;background:#ea9248"></div><svg class="a" style="left:171px;top:135px;" width="38" height="38" viewBox="0 0 38 38"><circle cx="19" cy="19" r="18.6" fill="#4da4ea"/><path d="M29.5 12.6c-.8.35-1.6.57-2.45.67.88-.53 1.56-1.36 1.88-2.36-.83.49-1.74.85-2.7 1.04A4.26 4.26 0 0 0 19 15.8 12.1 12.1 0 0 1 10.2 11.3a4.26 4.26 0 0 0 1.32 5.68c-.7-.02-1.36-.21-1.93-.53v.05a4.26 4.26 0 0 0 3.42 4.18c-.63.17-1.29.2-1.93.07a4.26 4.26 0 0 0 3.98 2.96A8.55 8.55 0 0 1 8.8 25.5 12.06 12.06 0 0 0 15.3 27.4c7.84 0 12.13-6.5 12.13-12.13l-.01-.55c.83-.6 1.55-1.35 2.12-2.2z" fill="#fff"/></svg>
<svg class="a" style="left:272px;top:135px;" width="39" height="39" viewBox="0 0 39 39"><circle cx="19.5" cy="19.5" r="18.7" fill="#0f6fb3"/><path d="M13 29V12.5A3 3 0 0 1 16 9.5H23A3 3 0 0 1 26 12.5V29" stroke="#fff" stroke-width="2.2" fill="none"/><path d="M9.5 29.5H29.5" stroke="#fff" stroke-width="2.4"/><path d="M16 14H23M16 18.5H23M16 23H23" stroke="#fff" stroke-width="2.2"/><path d="M17.5 29V25.5H21.5V29" stroke="#fff" stroke-width="1.8" fill="none"/></svg>
<svg class="a" style="left:375px;top:135px;" width="39" height="39" viewBox="0 0 39 39"><circle cx="19.3" cy="19" r="18.7" fill="#e4479a"/><rect x="7.5" y="7" width="24" height="24" rx="5.5" stroke="#fff" stroke-width="2.3" fill="none"/><circle cx="19.5" cy="19" r="5.8" stroke="#fff" stroke-width="2.3" fill="none"/><circle cx="26" cy="12" r="1.4" fill="#fff"/></svg>
<svg class="a" style="left:477px;top:135px;" width="38" height="38" viewBox="0 0 38 38"><circle cx="18.5" cy="19" r="18.5" fill="#4b83e4"/><path d="M27 17.5H19V21.5H23.3C22.6 24 20.8 25.5 18.5 25.5A6.5 6.5 0 1 1 22.8 14.1L25.6 11.3A10.5 10.5 0 1 0 29 19.5C29 18.8 28.9 18.1 28.8 17.5Z" fill="#ececec"/></svg>
<svg class="a" style="left:578px;top:135px;" width="38" height="38" viewBox="0 0 38 38"><circle cx="18.7" cy="19" r="18.6" fill="#f30000"/><rect x="7" y="10.5" width="23.5" height="17" rx="4.5" fill="#fff"/><path d="M16 14.6V23.4L23.2 19Z" fill="#f30000"/></svg>
<svg class="a" style="left:670px;top:125px;" width="58" height="58" viewBox="0 0 58 58"><circle cx="28.6" cy="28.3" r="27.4" stroke="#bcbcbc" stroke-width="1.3" fill="#eef3fb"/><path d="M17.1 16.9H24V26.7H17.1ZM27 16.9H40.1V26.7H27ZM17.1 29.8H30.3V40H17.1ZM33.1 29.8H40.1V40H33.1Z" fill="#0a72e8"/></svg>
<svg class="a" style="left:773px;top:125px;" width="58" height="58" viewBox="0 0 58 58"><circle cx="28.5" cy="28.3" r="27.4" stroke="#bcbcbc" stroke-width="1.3" fill="#f7f0fb"/><path d="M28.6 14.9A13.5 13.5 0 1 0 42.1 29" stroke="#a259d9" stroke-width="3" fill="none"/><circle cx="28.6" cy="28.4" r="9.6" fill="#a259d9"/><path d="M28.3 22.5V29.6H33" stroke="#fff" stroke-width="2" fill="none"/><circle cx="33.5" cy="16.2" r="1.3" fill="#a259d9"/><circle cx="37.6" cy="19.2" r="1.3" fill="#a259d9"/><circle cx="40.6" cy="23.6" r="1.3" fill="#a259d9"/></svg>
<div class="a" style="left:881px;top:123px;width:2px;height:57px;background:#d2d2d2"></div><svg class="a" style="left:932px;top:125px;" width="58" height="58" viewBox="0 0 58 58"><circle cx="28.9" cy="28.4" r="27.4" stroke="#bcbcbc" stroke-width="1.3" fill="#e9f0f8"/><path d="M25.3 38.1C17 39 11.9 34 11.9 28.1C11.9 22 16.5 18.1 21.9 18.1C24 18.1 25.5 18.8 26.8 19.8L35.3 26.9C37.5 28.8 36.5 32 33.6 32C32.8 32 32.2 31.6 31.6 31.1L24.6 24.7C22.8 23.2 20.6 24.8 21.1 26.8C21.3 28 22.5 28.8 23.6 29.6L30.4 35.4C32 36.8 33.5 38.4 35.3 38.4C41 38.4 45.6 33.8 45.6 28.1C45.6 22.6 41.5 18.1 36.5 18.1L32.6 18.3" stroke="#2a6db3" stroke-width="2.8" fill="none" stroke-linecap="round" stroke-linejoin="round"/></svg>
<svg class="a" style="left:1035px;top:125px;" width="58" height="58" viewBox="0 0 58 58"><circle cx="29" cy="28.4" r="27.4" stroke="#bcbcbc" stroke-width="1.3" fill="#f1f3ef"/><path d="M32.5 16.5L36.5 15.5L38.5 16.5L35 37.5L22.5 38L18.5 41.5L21.5 24L31 23.5" stroke="#16963e" stroke-width="3.3" fill="none" stroke-linejoin="round"/><circle cx="28.7" cy="31.4" r="1.4" fill="#16963e"/></svg>
<svg class="a" style="left:2047px;top:133px;" width="36" height="32" viewBox="0 0 36 32"><rect x="3.2" y="5.8" width="29" height="22.5" rx="3.2" stroke="#111" stroke-width="2.3" fill="none"/><path d="M3.2 13.4H32.2M9.5 2.5V8.5M26 2.5V8.5" stroke="#111" stroke-width="2.3"/></svg>
<svg class="a" style="left:2314px;top:136px;" width="35" height="28" viewBox="0 0 35 28"><rect x="3.3" y="3" width="29" height="21.5" rx="3" stroke="#111" stroke-width="2.3" fill="none"/><path d="M3.5 5.5L17.8 16L32 5.5" stroke="#111" stroke-width="2.3" fill="none"/></svg>
<svg class="a" style="left:2497px;top:132px;" width="34" height="34" viewBox="0 0 34 34"><circle cx="16.8" cy="17.3" r="14" stroke="#111" stroke-width="2.3" fill="none"/><path d="M16.5 9.5V17.5L23.2 20.5" stroke="#111" stroke-width="2.3" fill="none"/></svg>
<svg class="a" style="left:2720px;top:131px;" width="36" height="33" viewBox="0 0 36 33"><path d="M12 7H7A3.8 3.8 0 0 0 3.2 10.8V25.8A3.8 3.8 0 0 0 7 29.6H28.8A3.8 3.8 0 0 0 32.6 25.8V22" stroke="#111" stroke-width="2.3" fill="none"/><path d="M11.5 21C12 14 18 9.5 25 10H32.5M26.5 3.5L32.8 10L26.5 16.5" stroke="#111" stroke-width="2.3" fill="none" stroke-linejoin="round"/></svg>
<svg class="a" style="left:29px;top:342px;" width="28" height="32" viewBox="0 0 28 32"><path d="M5.8 3H17L25.5 11V26.5A3.3 3.3 0 0 1 22.2 29.8H5.8A3.3 3.3 0 0 1 2.5 26.5V6.3A3.3 3.3 0 0 1 5.8 3Z" stroke="#111" stroke-width="2.2" fill="none" stroke-linejoin="round"/><path d="M16.3 3.5V11.2H25" stroke="#111" stroke-width="2.2" fill="none"/><path d="M7.5 12H11M7.5 17.5H19.5M7.5 22.5H19.5" stroke="#111" stroke-width="2.2"/></svg>
<svg class="a" style="left:27px;top:423px;" width="32" height="28" viewBox="0 0 32 28"><circle cx="11.3" cy="8" r="5" stroke="#111" stroke-width="2.2" fill="none"/><path d="M2.3 25.5V24A8.5 7 0 0 1 19.5 24V25.5" stroke="#111" stroke-width="2.3" fill="none" stroke-linecap="round"/><path d="M19 2.5A5.5 5.5 0 0 1 19.2 13.2M24 17A7 7 0 0 1 28.5 24V25.5" stroke="#111" stroke-width="2.2" fill="none" stroke-linecap="round"/></svg>
<svg class="a" style="left:27px;top:499px;" width="32" height="30" viewBox="0 0 32 30"><path d="M24.7 1.6V26.5M24.7 3.8L12.6 9H7.5A5.7 5.7 0 0 0 7.5 20.4H12.6L24.7 23.5M8.8 20.4V28M28 12V16" stroke="#111" stroke-width="2.2" fill="none" stroke-linejoin="round" stroke-linecap="round"/></svg>
<svg class="a" style="left:27px;top:581px;" width="32" height="24" viewBox="0 0 32 24"><path d="M2.4 20.7L12.6 11.6L16.4 16.9L28.5 3.3M20.2 3.3H28.5V11.6" stroke="#111" stroke-width="2.2" fill="none" stroke-linejoin="round"/></svg>
<svg class="a" style="left:27px;top:655px;" width="32" height="31" viewBox="0 0 32 31"><path d="M8.5 12.5H4A2.3 2.3 0 0 0 1.8 14.8V26.5A2.3 2.3 0 0 0 4 28.8H8.5ZM8.5 12.5L14.5 2.5C17 2.5 18.5 4.5 18 7L17 12H25.5A3 3 0 0 1 28.5 15.5L26.8 25.8A3.5 3.5 0 0 1 23.3 28.8H8.5" stroke="#111" stroke-width="2.2" fill="none" stroke-linejoin="round"/></svg>
<svg class="a" style="left:1107px;top:917px;" width="32" height="27" viewBox="0 0 32 27"><rect x="2.9" y="2.9" width="26" height="21.5" rx="4" stroke="#111" stroke-width="1.8" fill="none"/><path d="M6.1 17.3L11.7 11.4L17.6 16.4L20.7 13.5L24.6 17.3" stroke="#111" stroke-width="1.8" fill="none"/><circle cx="22.5" cy="8.4" r="2.2" stroke="#111" stroke-width="1.5" fill="none"/></svg>
<div class="a" style="left:861px;top:261px;width:11px;height:11px;border-radius:50%;background:#e0302a"></div><div class="a" style="left:566px;top:219px;width:253px;height:83px;border:14px solid #3452f6;border-radius:8px;background:#fff;box-sizing:content-box;left:559px;top:212px;width:239px;height:70px"></div><div class="a" style="left:579.3px;top:229.7px;width:232.7px;height:61.7px;background:#000;border-radius:6px 0 0 6px"></div><div class="a" style="left:687px;top:225px;width:24px;height:8px;background:#000;border-radius:6px 6px 0 0"></div><div class="t" style="left:602.8px;top:244.6px;font-size:29.07px;line-height:29.07px;color:#fff;transform:scaleX(0.9165);-webkit-text-stroke:0.3px #fff;">Custom Reports</div>
<svg class="a" style="left:0;top:0" width="2880" height="400" viewBox="0 0 2880 400"><path d="M820.6 304.2L929.3 223L932.6 254.9L1324 220.8L943.2 315.8L949.7 345.8Z" fill="#3352f7" stroke="#3352f7" stroke-width="12" stroke-linejoin="round"/></svg>
<div class="a" style="left:2879px;top:96px;width:1px;height:1460px;background:#e4e4e6"></div><div class="a" style="left:2879px;top:0;width:1px;height:96px;background:#f4f6fa"></div><div class="a" style="left:0;top:0;width:1px;height:96px;background:#f4f6fa"></div><div class="a" style="left:0;top:96px;width:1px;height:1460px;background:#e2e2e2"></div></body></html>
